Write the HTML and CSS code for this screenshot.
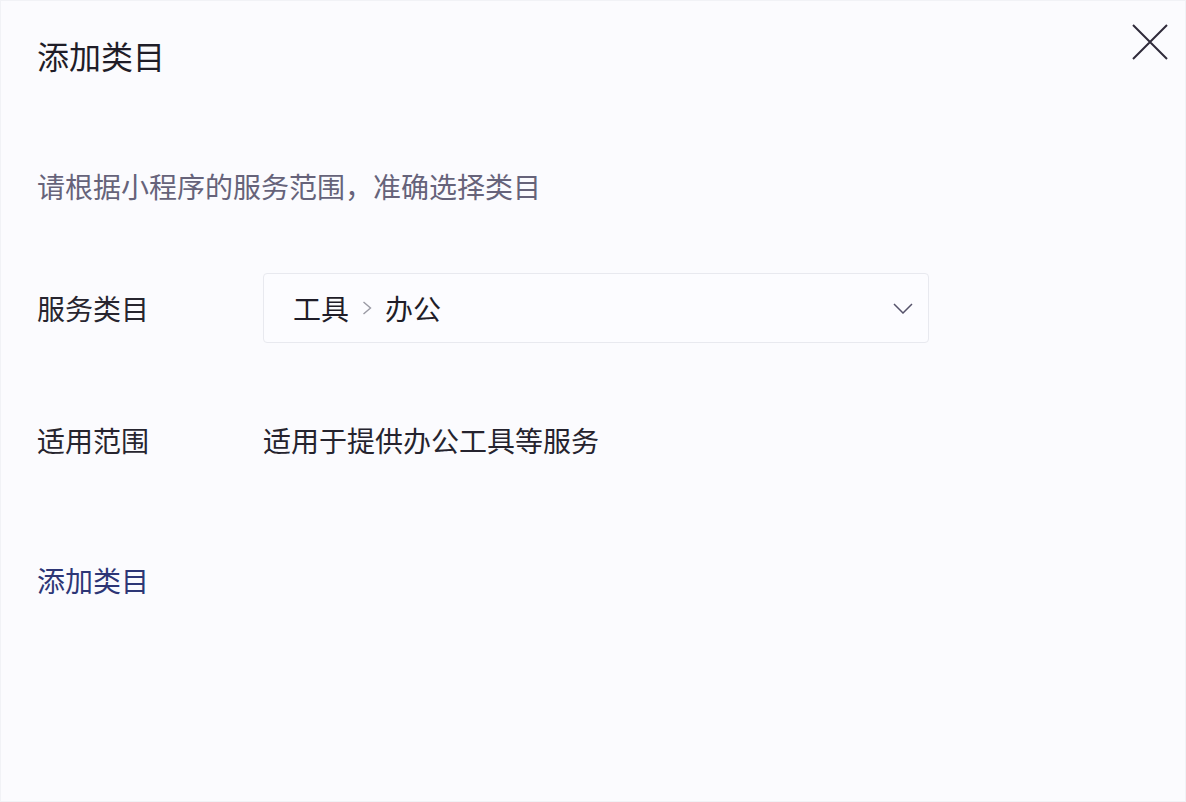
FILE: index.html
```html
<!DOCTYPE html>
<html lang="zh-CN">
<head>
<meta charset="utf-8">
<title>添加类目</title>
<link rel="stylesheet" href="styles.css">
</head>
<body>
<div class="dialog">
  <div class="header">
    <h1 class="title">添加类目</h1>
    <button class="close" aria-label="关闭">
      <svg width="36" height="36" viewBox="0 0 36 36"><path d="M1 1 L35 35 M35 1 L1 35" stroke="#2f2a3a" stroke-width="2" fill="none"/></svg>
    </button>
  </div>
  <p class="hint">请根据小程序的服务范围，准确选择类目</p>
  <div class="row row-select">
    <div class="label">服务类目</div>
    <div class="select">
      <span class="crumb">工具</span>
      <svg class="sep" width="10" height="14" viewBox="0 0 10 14"><path d="M1.5 1 L8.5 7 L1.5 13" stroke="#9a9aa4" stroke-width="1.4" fill="none"/></svg>
      <span class="crumb">办公</span>
      <svg class="arrow" width="20" height="11" viewBox="0 0 20 11"><path d="M1 1 L10 10 L19 1" stroke="#55526a" stroke-width="1.5" fill="none"/></svg>
    </div>
  </div>
  <div class="row row-scope">
    <div class="label">适用范围</div>
    <div class="value">适用于提供办公工具等服务</div>
  </div>
  <a class="link" href="#">添加类目</a>
</div>
</body>
</html>
```

FILE: styles.css
```css
html, body {
  margin: 0;
  padding: 0;
  background: #fbfbfe;
}
body {
  font-family: "Noto Sans CJK SC", "Noto Sans", sans-serif;
  color: #25232e;
}
.dialog {
  box-sizing: border-box;
  width: 1186px;
  height: 802px;
  border: 1px solid #f1f2f6;
  padding: 32px 0 0 36px;
  background: #fbfbfe;
}
.header {
  display: flex;
  align-items: flex-start;
  justify-content: space-between;
}
.title {
  margin: 0;
  font-size: 32px;
  line-height: 44px;
  font-weight: 400;
  color: #1f1d28;
}
.close {
  border: 0;
  background: none;
  padding: 0;
  margin: -9px 17px 0 0;
  width: 36px;
  height: 36px;
  cursor: pointer;
}
.close svg { display: block; }
.hint {
  margin: 89px 0 0;
  font-size: 28px;
  line-height: 40px;
  color: #66637a;
}
.row {
  display: flex;
  align-items: center;
}
.label {
  width: 226px;
  flex: none;
  font-size: 28px;
  line-height: 40px;
  color: #27252f;
}
.row-select {
  margin-top: 67px;
}
.select {
  box-sizing: border-box;
  width: 666px;
  height: 70px;
  border: 1px solid #e8e9ef;
  border-radius: 4px;
  background: #fcfcff;
  display: flex;
  align-items: center;
  padding: 0 15px 0 29px;
}
.crumb {
  font-size: 28px;
  line-height: 40px;
  color: #1f1d28;
}
.sep {
  margin: 0 13px 0 13px;
  display: block;
}
.arrow {
  margin-left: auto;
  display: block;
}
.row-scope {
  margin-top: 77px;
}
.value {
  font-size: 28px;
  line-height: 40px;
  color: #25232e;
}
.link {
  display: inline-block;
  margin-top: 100px;
  font-size: 28px;
  line-height: 40px;
  color: #2d3676;
  text-decoration: none;
}
```
